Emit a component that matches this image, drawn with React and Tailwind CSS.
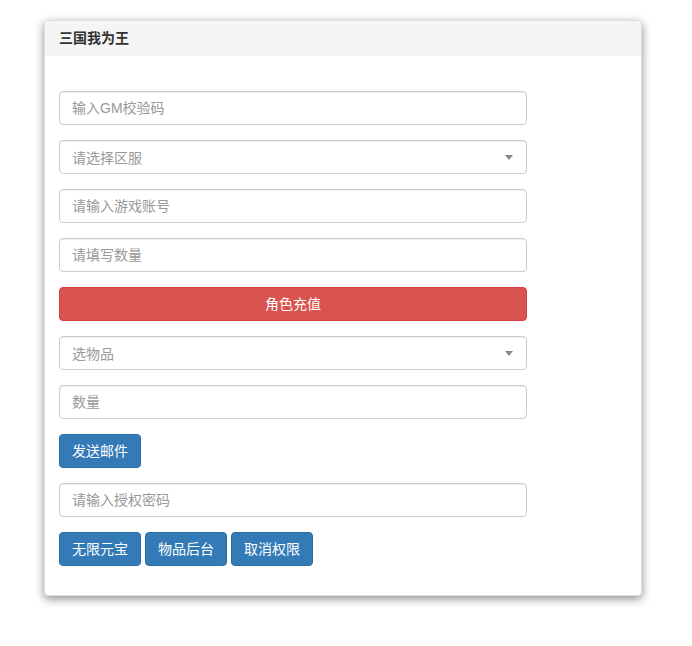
import { useState } from "react";

// GM tool panel — plain bootstrap-ish form
const font = { fontFamily: '"Liberation Sans", "Noto Sans CJK SC", sans-serif' };

function Field({ placeholder }) {
  return (
    <input
      placeholder={placeholder}
      className="block h-[34px] w-[468px] rounded-[4px] border border-[#ccc] bg-white px-3 text-[14px] text-[#555] shadow-[inset_0_1px_1px_rgba(0,0,0,0.075)] outline-none placeholder:text-[#999]"
    />
  );
}

function Select({ placeholder }) {
  return (
    <div className="relative h-[34px] w-[468px] rounded-[4px] border border-[#ccc] bg-white shadow-[inset_0_1px_1px_rgba(0,0,0,0.075)]">
      <span className="absolute left-3 top-[7px] text-[14px] text-[#999]">{placeholder}</span>
      <span className="absolute right-[13px] top-[14px] h-0 w-0 border-x-[4px] border-t-[5px] border-x-transparent border-t-[#888]" />
    </div>
  );
}

function BlueBtn({ children }) {
  return (
    <button className="h-[34px] rounded-[4px] border border-[#2e6da4] bg-[#337ab7] px-3 text-[14px] text-white">
      {children}
    </button>
  );
}

export default function App() {
  const [_, set] = useState(null);
  return (
    <div className="min-h-[646px] bg-white pt-[20px]" style={font}>
      <div className="ml-[44px] w-[598px] overflow-hidden rounded-[4px] border border-[#ddd] bg-white shadow-[0_3px_10px_rgba(0,0,0,0.45)]">
        <div className="flex h-[35px] items-center bg-[#f5f5f5] px-[14px] text-[14px] font-bold text-[#333]">
          三国我为王
        </div>
        <div className="flex flex-col gap-[15px] px-[14px] pb-[29px] pt-[35px]">
          <Field placeholder="输入GM校验码" />
          <Select placeholder="请选择区服" />
          <Field placeholder="请输入游戏账号" />
          <Field placeholder="请填写数量" />
          <button
            onClick={() => set(1)}
            className="h-[34px] w-[468px] rounded-[4px] border border-[#d43f3a] bg-[#d9534f] text-[14px] text-white"
          >
            角色充值
          </button>
          <Select placeholder="选物品" />
          <Field placeholder="数量" />
          <div>
            <BlueBtn>发送邮件</BlueBtn>
          </div>
          <Field placeholder="请输入授权密码" />
          <div className="flex gap-[4px]">
            <BlueBtn>无限元宝</BlueBtn>
            <BlueBtn>物品后台</BlueBtn>
            <BlueBtn>取消权限</BlueBtn>
          </div>
        </div>
      </div>
    </div>
  );
}
